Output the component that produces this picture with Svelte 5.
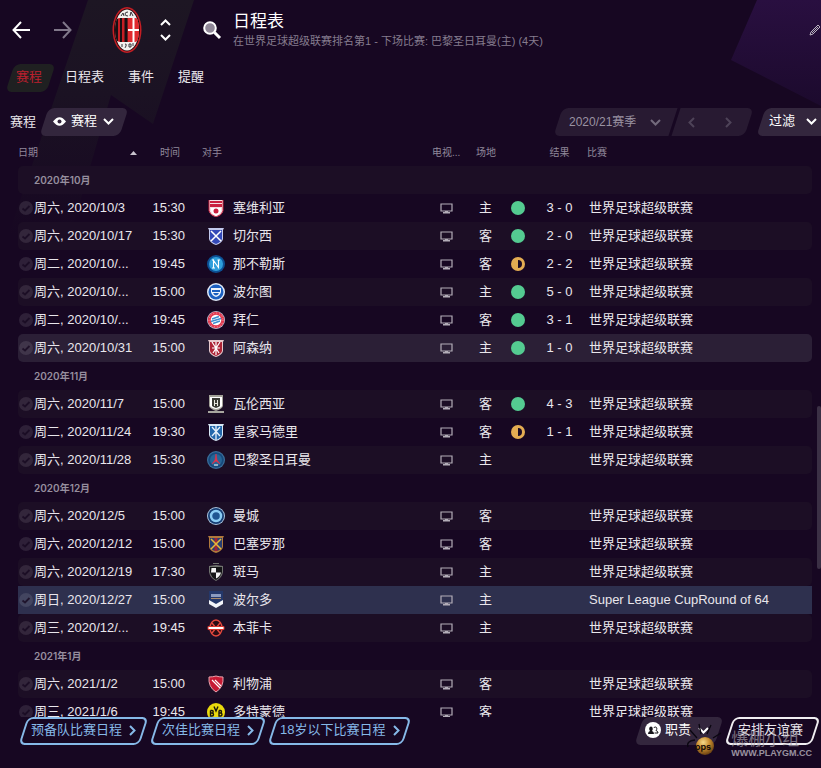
<script lang="ts">
  type Fixture = {
    date: string;
    time: string;
    team: string;
    crest: string;
    venue: "主" | "客";
    result?: "win" | "draw";
    score?: string;
    competition?: string;
    state?: "hover" | "selected";
  };

  type Month = { name: string; fixtures: Fixture[] };

  const league = "世界足球超级联赛";

  const tabs = ["赛程", "日程表", "事件", "提醒"];
  let activeTab = $state("赛程");

  const months: Month[] = [
    {
      name: "2020年10月",
      fixtures: [
        { date: "周六, 2020/10/3", time: "15:30", team: "塞维利亚", crest: "sevilla", venue: "主", result: "win", score: "3 - 0" },
        { date: "周六, 2020/10/17", time: "15:30", team: "切尔西", crest: "chelsea", venue: "客", result: "win", score: "2 - 0" },
        { date: "周二, 2020/10/...", time: "19:45", team: "那不勒斯", crest: "napoli", venue: "客", result: "draw", score: "2 - 2" },
        { date: "周六, 2020/10/...", time: "15:00", team: "波尔图", crest: "porto", venue: "主", result: "win", score: "5 - 0" },
        { date: "周二, 2020/10/...", time: "19:45", team: "拜仁", crest: "bayern", venue: "客", result: "win", score: "3 - 1" },
        { date: "周六, 2020/10/31", time: "15:00", team: "阿森纳", crest: "arsenal", venue: "主", result: "win", score: "1 - 0", state: "hover" },
      ],
    },
    {
      name: "2020年11月",
      fixtures: [
        { date: "周六, 2020/11/7", time: "15:00", team: "瓦伦西亚", crest: "valencia", venue: "客", result: "win", score: "4 - 3" },
        { date: "周二, 2020/11/24", time: "19:30", team: "皇家马德里", crest: "madrid", venue: "客", result: "draw", score: "1 - 1" },
        { date: "周六, 2020/11/28", time: "15:30", team: "巴黎圣日耳曼", crest: "paris", venue: "主" },
      ],
    },
    {
      name: "2020年12月",
      fixtures: [
        { date: "周六, 2020/12/5", time: "15:00", team: "曼城", crest: "city", venue: "客" },
        { date: "周六, 2020/12/12", time: "15:00", team: "巴塞罗那", crest: "barcelona", venue: "客" },
        { date: "周六, 2020/12/19", time: "17:30", team: "斑马", crest: "zebre", venue: "主" },
        { date: "周日, 2020/12/27", time: "15:00", team: "波尔多", crest: "bordeaux", venue: "主", competition: "Super League CupRound of 64", state: "selected" },
        { date: "周三, 2020/12/...", time: "19:45", team: "本菲卡", crest: "benfica", venue: "主" },
      ],
    },
    {
      name: "2021年1月",
      fixtures: [
        { date: "周六, 2021/1/2", time: "15:00", team: "利物浦", crest: "liverpool", venue: "客" },
        { date: "周三, 2021/1/6", time: "19:45", team: "多特蒙德", crest: "dortmund", venue: "客" },
      ],
    },
  ];

  const squads = ["预备队比赛日程", "次佳比赛日程", "18岁以下比赛日程"];
</script>

{#snippet chevron(dir: "up" | "down" | "left" | "right")}
  {#if dir === "up" || dir === "down"}
    <svg class="chevron" width="11" height="7" viewBox="0 0 11 7" aria-hidden="true">
      <path d={dir === "up" ? "M1 6 5.500 1.500 10 6" : "M1 1 5.500 5.500 10 1"} />
    </svg>
  {:else}
    <svg class="chevron" width="7" height="11" viewBox="0 0 7 11" aria-hidden="true">
      <path d={dir === "left" ? "M6 1 1.500 5.500 6 10" : "M1 1 5.500 5.500 1 10"} />
    </svg>
  {/if}
{/snippet}

{#snippet crest(kind: string)}
  <svg class="crest" width="18" height="18" viewBox="0 0 18 18" aria-hidden="true">
    {#if kind === "sevilla"}
      <path d="M2 1h14v11q-1 4-7 6-6-2-7-6z" fill="#f3dfe2" />
      <path d="M3 2h12v2H3zM3 5h12v3H3z" fill="#c9203f" />
      <path d="M4 9v3q1 3 5 5 4-2 5-5V9z" fill="#fff" />
      <circle cx="9" cy="12" r="2.500" fill="#c9203f" />
      <path d="M2 1v11q1 4 7 6 6-2 7-6V1" fill="none" stroke="#c9203f" />
    {:else if kind === "chelsea"}
      <path d="M1 1h16l-1 2v9q-1 4-7 6-6-2-7-6V3z" fill="#c3caee" />
      <path d="M3 3h12v9q-1 3-6 5-5-2-6-5z" fill="#3349b8" />
      <path d="M4 4 14 14M14 4 4 14" stroke="#fff" stroke-width="1.500" />
    {:else if kind === "napoli"}
      <circle cx="9" cy="9" r="9" fill="#0c4f93" />
      <circle cx="9" cy="9" r="7" fill="#2f9fdc" />
      <path d="M6.500 13V5.500l5 7V5M5 5h2M10.500 5h2.500M5 13h3" fill="none" stroke="#fff" stroke-width="1.100" />
    {:else if kind === "porto"}
      <circle cx="9" cy="9" r="9" fill="#dfe9f7" />
      <circle cx="9" cy="9" r="7.500" fill="#1b5fc0" />
      <path d="M4 5h10v4q-1 4-5 5-4-1-5-5z" fill="#eef4fc" />
      <path d="M5 7h8v2H5zM6 10h6q-1 2-3 2.500Q7 12 6 10z" fill="#1b5fc0" />
    {:else if kind === "bayern"}
      <circle cx="9" cy="9" r="9" fill="#b9c3d8" />
      <circle cx="9" cy="9" r="8.300" fill="#e23a50" />
      <circle cx="9" cy="9" r="7" fill="none" stroke="#f3a7b0" stroke-dasharray="1 2" />
      <circle cx="9" cy="9" r="5.300" fill="#fff" />
      <path d="M5 8 12 5.500M4 10.500 14 7.500M6 12.500 13 10" stroke="#3c8fd0" stroke-width="1.500" />
    {:else if kind === "arsenal"}
      <path d="M1 1h16l-1 2v9q-1 4-7 6-6-2-7-6V3z" fill="#e6c9cd" />
      <path d="M3 3h12v9q-1 3-6 5-5-2-6-5z" fill="#ad2436" />
      <path d="M9 3v13M5 3l7 11M13 3 6 14M5 9h8" stroke="#fff" stroke-width="1.200" />
    {:else if kind === "valencia"}
      <path d="M2 0h14v11q-1 3-7 5-6-2-7-5z" fill="#a3a298" />
      <path d="M3 2h12v9q-1 2-6 3-5-1-6-3z" fill="#fff" />
      <path d="M5 3h8v8q-1 1-4 2-3-1-4-2z" fill="#3a3a34" />
      <path d="M7 5h1v3h2V5h1v6h-1V9H8v2H7z" fill="#e8e7df" />
      <path d="M1 16h16v2H1z" fill="#a8a79f" />
    {:else if kind === "madrid"}
      <path d="M1 1h16l-1 2v9q-1 4-7 6-6-2-7-6V3z" fill="#d8e8f6" />
      <path d="M3 3h12v9q-1 3-6 5-5-2-6-5z" fill="#2368ac" />
      <path d="M9 2v15M5 4l8 9M13 4 5 13" stroke="#e8f2fb" stroke-width="1.300" />
    {:else if kind === "paris"}
      <circle cx="9" cy="9" r="9" fill="#3c6f9b" />
      <circle cx="9" cy="9" r="7.800" fill="#174a7c" />
      <circle cx="9" cy="9" r="6" fill="#256596" />
      <path d="M9 3 8 9l-3 4 4-3 4 3-3-4z" fill="#e2334a" stroke="#e2334a" stroke-width=".6" />
      <path d="M7 14h4" stroke="#fff" />
    {:else if kind === "city"}
      <circle cx="9" cy="9" r="9" fill="#a9c3dc" />
      <circle cx="9" cy="9" r="8" fill="#153e74" />
      <circle cx="9" cy="9" r="5" fill="#1f5692" stroke="#8ccdf4" stroke-width="2.500" />
    {:else if kind === "barcelona"}
      <path d="M1 1h16l-1 2v9q-1 4-7 6-6-2-7-6V3z" fill="#b0793c" />
      <path d="M3 3h12v9q-1 3-6 4-5-1-6-4z" fill="#273e73" />
      <path d="M7.500 3h3v13h-3z" fill="#a02235" />
      <path d="M4 4l10 10M14 4 4 14" stroke="#e4b73c" stroke-width="1.500" />
    {:else if kind === "zebre"}
      <path d="M6 0h6v1H6zM2 3l7-1 7 1v6q-1 6-7 9-6-3-7-9z" fill="#70736f" />
      <path d="M3 4h12v5q-1 5-6 8-5-3-6-8z" fill="#151517" />
      <path d="M4.500 5H9v4.500H4zM9 9.500h5q-1 4-5 6z" fill="#f2f2f2" />
    {:else if kind === "bordeaux"}
      <path d="M2 0h14v11l-7 6-7-6z" fill="#24386b" />
      <path d="M4 3h10v3H4z" fill="#8b9bc0" />
      <path d="M4 7h10v1H4z" fill="#a98a6b" />
      <path d="M2 9l7 4 7-4v4l-7 4-7-4z" fill="#f3f5fa" />
    {:else if kind === "benfica"}
      <ellipse cx="9" cy="9" rx="6" ry="8" fill="#2a0d14" stroke="#e2483d" stroke-width="1.500" />
      <path d="M5 4l8 10M13 4 5 14" stroke="#e2483d" stroke-width="1.400" />
      <path d="M1 7.500h16v3H1z" fill="#fff" stroke="#d9352d" />
    {:else if kind === "liverpool"}
      <path d="M9 1q3 1 7 1 1 10-7 15Q1 12 2 2q4 0 7-1z" fill="#c61a34" stroke="#e8a3ae" />
      <path d="M5 5l8 8M8 5l6 6" stroke="#fff" stroke-width="1.100" />
    {:else}
      <circle cx="9" cy="9" r="9" fill="#e9d90d" />
      <path
        d="M3.500 7.500v5.500h1.500q1.500 0 1.500-1.500T5 10H3.500M5 10q1.200-.2 1.200-1.300T5 7.500H3.500M7 3.500 9 8l2-4.500M12 7.500V13h1.500q1.500 0 1.500-1.500T13.500 10H12M13.500 10q1-.2 1-1.300t-1-1.200H12"
        fill="none"
        stroke="#17160c"
        stroke-width="1.400"
      />
    {/if}
  </svg>
{/snippet}

<div class="screen">
  <svg class="backdrop" width="821" height="240" viewBox="0 0 821 240" aria-hidden="true">
    <defs>
      <linearGradient id="band" x1="0" y1="0" x2="0" y2="1">
        <stop offset="0" stop-color="#1d1623" />
        <stop offset=".4" stop-color="#1b1223" />
        <stop offset="1" stop-color="#1b1223" stop-opacity="0" />
      </linearGradient>
      <linearGradient id="corner" x1="0" y1="0" x2="0" y2="1">
        <stop offset="0" stop-color="#290f40" />
        <stop offset="1" stop-color="#1c0a2d" />
      </linearGradient>
    </defs>
    <path d="M88 0H194L153 124 111 95 70 236H8z" fill="url(#band)" />
    <path d="M757 0H821V106L731 60z" fill="url(#corner)" />
  </svg>

  <header>
    <button type="button" class="icon-btn" aria-label="后退">
      <svg width="19" height="18" viewBox="0 0 19 18"><path d="M18 9H2M9 1 1.500 9 9 17" /></svg>
    </button>
    <button type="button" class="icon-btn forward" aria-label="前进">
      <svg width="19" height="18" viewBox="0 0 19 18"><path d="M1 9h16M10 1l7.500 8-7.500 8" /></svg>
    </button>

    <svg class="club" width="30" height="46" viewBox="0 0 30 46" aria-hidden="true">
      <defs>
        <clipPath id="inner"><ellipse cx="15" cy="23" rx="12" ry="20.500" /></clipPath>
      </defs>
      <ellipse cx="15" cy="23" rx="14.500" ry="23" fill="#c51e24" />
      <ellipse cx="15" cy="23" rx="13" ry="21.500" fill="#2a0d10" />
      <ellipse cx="15" cy="23" rx="12" ry="20.500" fill="#f2f0ee" />
      <g clip-path="url(#inner)">
        <path d="M2 15q2-4 6-4h14q4 0 6 4v16q-2 4-6 4H8q-4 0-6-4z" fill="#c51e24" />
        <path d="M3 12h3v22H3zM8 11h2v24H8zM12.500 11h3v24h-3z" fill="#161014" />
        <path d="M16 11h6q4 0 6 4v16q-2 4-6 4h-6z" fill="#e02a2e" />
        <path d="M20.500 11h2v24h-2zM16 22h12v2H16z" fill="#fff" />
      </g>
      <path d="M9 9l2-3 1 3M16 5q-3 0-3 2t3 2M18 9l1-4 2 4M10 37v3M13 37q2 0 1 2t-1 2M17 37h2v3h-2zM21 36v3" fill="none" stroke="#37343a" />
    </svg>

    <div class="switcher">
      <button type="button" class="icon-btn" aria-label="上一个">{@render chevron("up")}</button>
      <button type="button" class="icon-btn" aria-label="下一个">{@render chevron("down")}</button>
    </div>

    <button type="button" class="icon-btn search" aria-label="搜索">
      <svg width="19" height="19" viewBox="0 0 19 19">
        <circle cx="7" cy="7" r="5.800" fill="#8f8797" />
        <path d="M11.500 11.500 17 17" stroke-width="3" />
      </svg>
    </button>

    <div class="heading">
      <h1>日程表</h1>
      <p>在世界足球超级联赛排名第1 - 下场比赛: 巴黎圣日耳曼(主) (4天)</p>
    </div>

    <button type="button" class="icon-btn edit" aria-label="编辑">
      <svg width="12" height="12" viewBox="0 0 12 12"><path d="M1 11l1-3 7-7 2 2-7 7zM3 9l6-6" /></svg>
    </button>
  </header>

  <nav class="tabs">
    {#each tabs as tab}
      <button type="button" class="tab" class:active={tab === activeTab} onclick={() => (activeTab = tab)}>
        {tab}
      </button>
    {/each}
  </nav>

  <div class="toolbar">
    <label for="view">赛程</label>
    <div class="slant view">
      <svg width="13" height="9" viewBox="0 0 13 9" aria-hidden="true">
        <path d="M0 4.500Q6.500-4 13 4.500 6.500 13 0 4.500z" fill="#fff" />
        <circle cx="6.500" cy="4.500" r="2" fill="#33263d" />
      </svg>
      <select id="view">
        <option>赛程</option>
      </select>
      {@render chevron("down")}
    </div>

    <div class="slant season">
      <select aria-label="赛季">
        <option>2020/21赛季</option>
      </select>
      {@render chevron("down")}
    </div>
    <div class="slant season-nav">
      <button type="button" class="icon-btn" aria-label="上赛季">{@render chevron("left")}</button>
      <button type="button" class="icon-btn" aria-label="下赛季">{@render chevron("right")}</button>
    </div>
    <button type="button" class="slant filter">过滤 {@render chevron("down")}</button>
  </div>

  <main>
    <table>
      <colgroup>
        <col class="col-date" />
        <col class="col-time" />
        <col />
        <col class="col-tv" />
        <col class="col-venue" />
        <col class="col-dot" />
        <col class="col-score" />
        <col class="col-comp" />
      </colgroup>
      <thead>
        <tr>
          <th aria-sort="ascending">
            <div class="sort">
              日期
              <svg width="7" height="4" viewBox="0 0 7 4" aria-hidden="true"><path d="M0 4 3.500 0 7 4z" fill="#c9c4ce" /></svg>
            </div>
          </th>
          <th class="time">时间</th>
          <th>对手</th>
          <th>电视...</th>
          <th>场地</th>
          <th></th>
          <th class="score">结果</th>
          <th>比赛</th>
        </tr>
      </thead>
      <tbody>
        {#each months as month (month.name)}
          <tr class="month">
            <th colspan="8">{month.name}</th>
          </tr>
          {#each month.fixtures as fixture}
            <tr class={fixture.state}>
              <td>
                <div class="date">
                  <svg width="14" height="14" viewBox="0 0 14 14" aria-hidden="true">
                    <circle cx="7" cy="7" r="7" fill="#fff" fill-opacity=".1" />
                    <path d="M3.500 7.500 6 9.500 10.500 5" fill="none" stroke="#160920" stroke-opacity=".8" stroke-width="1.800" />
                  </svg>
                  {fixture.date}
                </div>
              </td>
              <td class="time">{fixture.time}</td>
              <td>
                <div class="team">
                  {@render crest(fixture.crest)}
                  {fixture.team}
                </div>
              </td>
              <td class="tv">
                <svg width="13" height="11" viewBox="0 0 13 11" role="img" aria-label="电视转播">
                  <path d="M1 1h11v7H1z" fill="none" stroke="#b3adb8" stroke-width="1.200" />
                  <path d="M5 8h3v1h2v1.500H3V9h2z" fill="#b3adb8" />
                </svg>
              </td>
              <td class="venue">{fixture.venue}</td>
              <td>
                {#if fixture.result}
                  <svg class="result" width="14" height="14" viewBox="0 0 14 14" role="img" aria-label={fixture.result}>
                    {#if fixture.result === "win"}
                      <circle cx="7" cy="7" r="7" fill="#54cb91" />
                    {:else}
                      <circle cx="7" cy="7" r="7" fill="#e4ad52" />
                      <path d="M7 3a4 4 0 0 1 0 8z" fill="#1b0c25" />
                    {/if}
                  </svg>
                {/if}
              </td>
              <td class="score">{fixture.score ?? ""}</td>
              <td class="comp">{fixture.competition ?? league}</td>
            </tr>
          {/each}
        {/each}
      </tbody>
    </table>
    <div class="scroll-thumb"></div>
  </main>

  <footer>
    {#each squads as squad}
      <button type="button" class="slant outline">{squad} {@render chevron("right")}</button>
    {/each}
    <button type="button" class="slant duties">
      <svg width="16" height="16" viewBox="0 0 16 16" aria-hidden="true">
        <circle cx="8" cy="8" r="8" fill="#fff" />
        <path d="M3 12q0-2.500 2-3-1-1-.8-2.800Q4.500 4.500 6 4.500t1.700 1.700Q8 8 7 9q2 .5 2 3z" fill="#17151b" />
        <path d="M9.500 11H13q0-2-2-2.500 1-1 .8-2.300Q11.500 5 10.300 5T9 6" fill="none" stroke="#17151b" />
      </svg>
      职责
      {@render chevron("down")}
    </button>
    <button type="button" class="slant outline friendly">安排友谊赛</button>
  </footer>

  <div class="watermark">
    <svg width="36" height="44" viewBox="0 0 36 44" aria-hidden="true">
      <defs>
        <radialGradient id="ball" cx=".4" cy=".3" r=".7">
          <stop offset="0" stop-color="#f3d98b" />
          <stop offset=".5" stop-color="#c98d2e" />
          <stop offset="1" stop-color="#6b4213" />
        </radialGradient>
      </defs>
      <path d="M2 26q-2-6 7-7M4 9l7 8M13 3l2 10M25 4l-4 9M35 12l-8 5" fill="none" stroke="#0a0610" stroke-width="1.300" />
      <circle cx="19" cy="25" r="9" fill="url(#ball)" />
      <text x="17" y="29" text-anchor="middle">ops</text>
    </svg>
    <div class="brand">
      <span class="brand-name">爆棚小组</span>
      <span class="brand-url">WWW.PLAYGM.CC</span>
    </div>
  </div>
</div>

<style>
  :global(body) {
    margin: 0;
    background: #170722;
  }

  .screen {
    position: relative;
    display: flex;
    flex-direction: column;
    height: 100vh;
    overflow: hidden;
    background: #170722;
    color: #e9e6ec;
    font-family: "Liberation Sans", "Noto Sans CJK SC", sans-serif;
    font-size: 13px;
    line-height: 20px;
  }

  .backdrop {
    position: absolute;
    top: 0;
    right: 0;
  }

  button,
  select {
    margin: 0;
    padding: 0;
    border: none;
    background: none;
    color: inherit;
    font: inherit;
    cursor: pointer;
  }

  select {
    appearance: none;
  }

  option {
    background: #2c2036;
  }

  svg {
    display: block;
    flex: none;
  }

  .chevron {
    fill: none;
    stroke: currentColor;
    stroke-width: 2;
  }

  .icon-btn {
    color: #fff;
  }

  .icon-btn svg {
    fill: none;
    stroke: currentColor;
    stroke-width: 2;
  }

  header {
    position: relative;
    display: flex;
    align-items: center;
    height: 60px;
    padding-left: 12px;
  }

  .forward {
    margin-left: 22px;
    color: #81788a;
  }

  .club {
    margin-left: 40px;
  }

  .switcher {
    display: flex;
    flex-direction: column;
    gap: 8px;
    margin-left: 18px;
  }

  .search {
    margin: 0 11px 0 32px;
  }

  .heading {
    flex: 1;
    white-space: nowrap;
  }

  h1 {
    margin: 0;
    font-size: 17px;
    font-weight: 400;
    line-height: 22px;
    color: #fff;
  }

  .heading p {
    margin: 0;
    font-size: 11px;
    line-height: 16px;
    color: #857c8e;
  }

  .edit svg {
    stroke: #b9b3bf;
    stroke-width: 1;
  }

  .tabs {
    position: relative;
    display: flex;
    gap: 4px;
    margin-top: 4px;
    padding-left: 10px;
  }

  .tab {
    position: relative;
    z-index: 0;
    height: 28px;
    padding: 0 10px 2px;
  }

  .tab:first-child {
    padding: 0 9px 2px 6px;
  }

  .tab.active {
    color: #bd1f2e;
  }

  .tab.active::before,
  .slant::before {
    content: "";
    position: absolute;
    inset: 0;
    z-index: -1;
    border-radius: 6px;
    background: #1f2021;
    transform: skewX(-18deg);
  }

  .slant {
    position: relative;
    z-index: 0;
    display: flex;
    align-items: center;
    height: 28px;
    box-sizing: border-box;
    padding-bottom: 2px;
    white-space: nowrap;
  }

  .slant::before {
    background: #33263d;
  }

  .toolbar {
    display: flex;
    align-items: center;
    margin-top: 16px;
    padding-left: 10px;
  }

  .view {
    gap: 5px;
    margin-left: 8px;
    padding-left: 9px;
    padding-right: 10px;
    color: #fff;
  }

  .season,
  .season-nav {
    padding-bottom: 0;
    color: #736a7c;
  }

  .season {
    gap: 13px;
    margin-left: auto;
    padding-left: 11px;
    padding-right: 12px;
    font-size: 12px;
  }

  .season::before {
    border-radius: 6px 0 0 6px;
  }

  .season::before,
  .season-nav::before {
    background: #281a32;
  }

  .season-nav {
    gap: 30px;
    margin-left: 3px;
    padding-left: 12px;
    padding-right: 17px;
  }

  .season-nav::before {
    border-radius: 0 6px 6px 0;
  }

  .season-nav .icon-btn {
    color: #4e4358;
  }

  .season select {
    color: #9a92a2;
  }

  .filter {
    gap: 11px;
    margin-left: 12px;
    padding-left: 8px;
    padding-right: 4px;
    color: #fff;
  }

  .filter::before {
    right: -12px;
  }

  main {
    position: relative;
    flex: 1;
    min-height: 0;
    overflow: hidden;
    padding: 2px 9px 0 18px;
  }

  table {
    width: 100%;
    table-layout: fixed;
    border-collapse: separate;
    border-spacing: 0;
  }

  .col-date {
    width: 122px;
  }

  .col-time {
    width: 62px;
  }

  .col-tv {
    width: 44px;
  }

  .col-venue {
    width: 35px;
  }

  .col-dot {
    width: 30px;
  }

  .col-score {
    width: 46px;
  }

  .col-comp {
    width: 225px;
  }

  th,
  td {
    height: 28px;
    padding: 0;
    text-align: left;
    font-weight: 400;
    white-space: nowrap;
  }

  thead th {
    height: 26px;
    padding-top: 2px;
    font-size: 10px;
    color: #90889a;
  }

  .sort {
    display: flex;
    align-items: center;
    justify-content: space-between;
    padding-right: 3px;
  }

  .time {
    padding-right: 17px;
    text-align: right;
  }

  thead .time {
    padding-right: 22px;
  }

  .score {
    padding-right: 9px;
    text-align: center;
  }

  tbody tr:nth-child(odd) > * {
    background: #1c0e25;
  }

  tbody tr > :first-child {
    border-radius: 5px 0 0 5px;
  }

  tbody tr > :last-child {
    border-radius: 0 5px 5px 0;
  }

  tbody .month > th {
    padding-left: 16px;
    border-radius: 5px;
    font-family: Inter, "Noto Sans CJK SC", sans-serif;
    font-size: 10px;
    font-weight: 600;
    color: #968e9e;
  }

  tbody .hover > td {
    background: #2b1f36;
  }

  tbody .selected > td {
    border-radius: 0;
    background: #2e304e;
  }

  .date {
    display: flex;
    align-items: center;
    gap: 1px;
    padding-left: 1px;
  }

  .team {
    display: flex;
    align-items: center;
    gap: 8px;
    padding-left: 5px;
  }

  .tv {
    padding-left: 8px;
  }

  .venue {
    padding-left: 3px;
  }

  .comp {
    padding-left: 2px;
  }

  .scroll-thumb {
    position: absolute;
    top: 46.500%;
    right: 0;
    width: 4px;
    height: 28%;
    border-radius: 2px;
    background: #3b3045;
  }

  footer {
    display: flex;
    gap: 10px;
    padding: 0 5px 23px 23px;
  }

  .outline {
    gap: 7px;
    padding-left: 8px;
    padding-right: 8px;
    color: #86b9e8;
  }

  .outline::before {
    border: 2px solid #86b9e8;
    background: #170722;
  }

  .duties {
    gap: 4px;
    margin-left: auto;
    padding-left: 6px;
    padding-right: 10px;
    color: #fff;
  }

  .duties .chevron {
    margin-left: 3px;
  }

  .friendly {
    padding-right: 13px;
    padding-left: 9px;
    color: #e9e6ec;
  }

  .friendly::before {
    border-color: #f0eef2;
  }

  .watermark {
    position: absolute;
    right: 9px;
    bottom: 3px;
    display: flex;
    align-items: flex-end;
    gap: 9px;
    pointer-events: none;
  }

  .watermark text {
    font: 700 9px Inter, sans-serif;
    fill: #1a1008;
  }

  .brand {
    display: flex;
    flex-direction: column;
    padding-bottom: 6px;
    opacity: 0.7;
  }

  .brand-name {
    font: 400 17px/18px "Noto Sans CJK SC", sans-serif;
    color: #a39da8;
  }

  .brand-url {
    font: 700 9px/12px "Liberation Sans", sans-serif;
    color: #d0ccd4;
  }
</style>
